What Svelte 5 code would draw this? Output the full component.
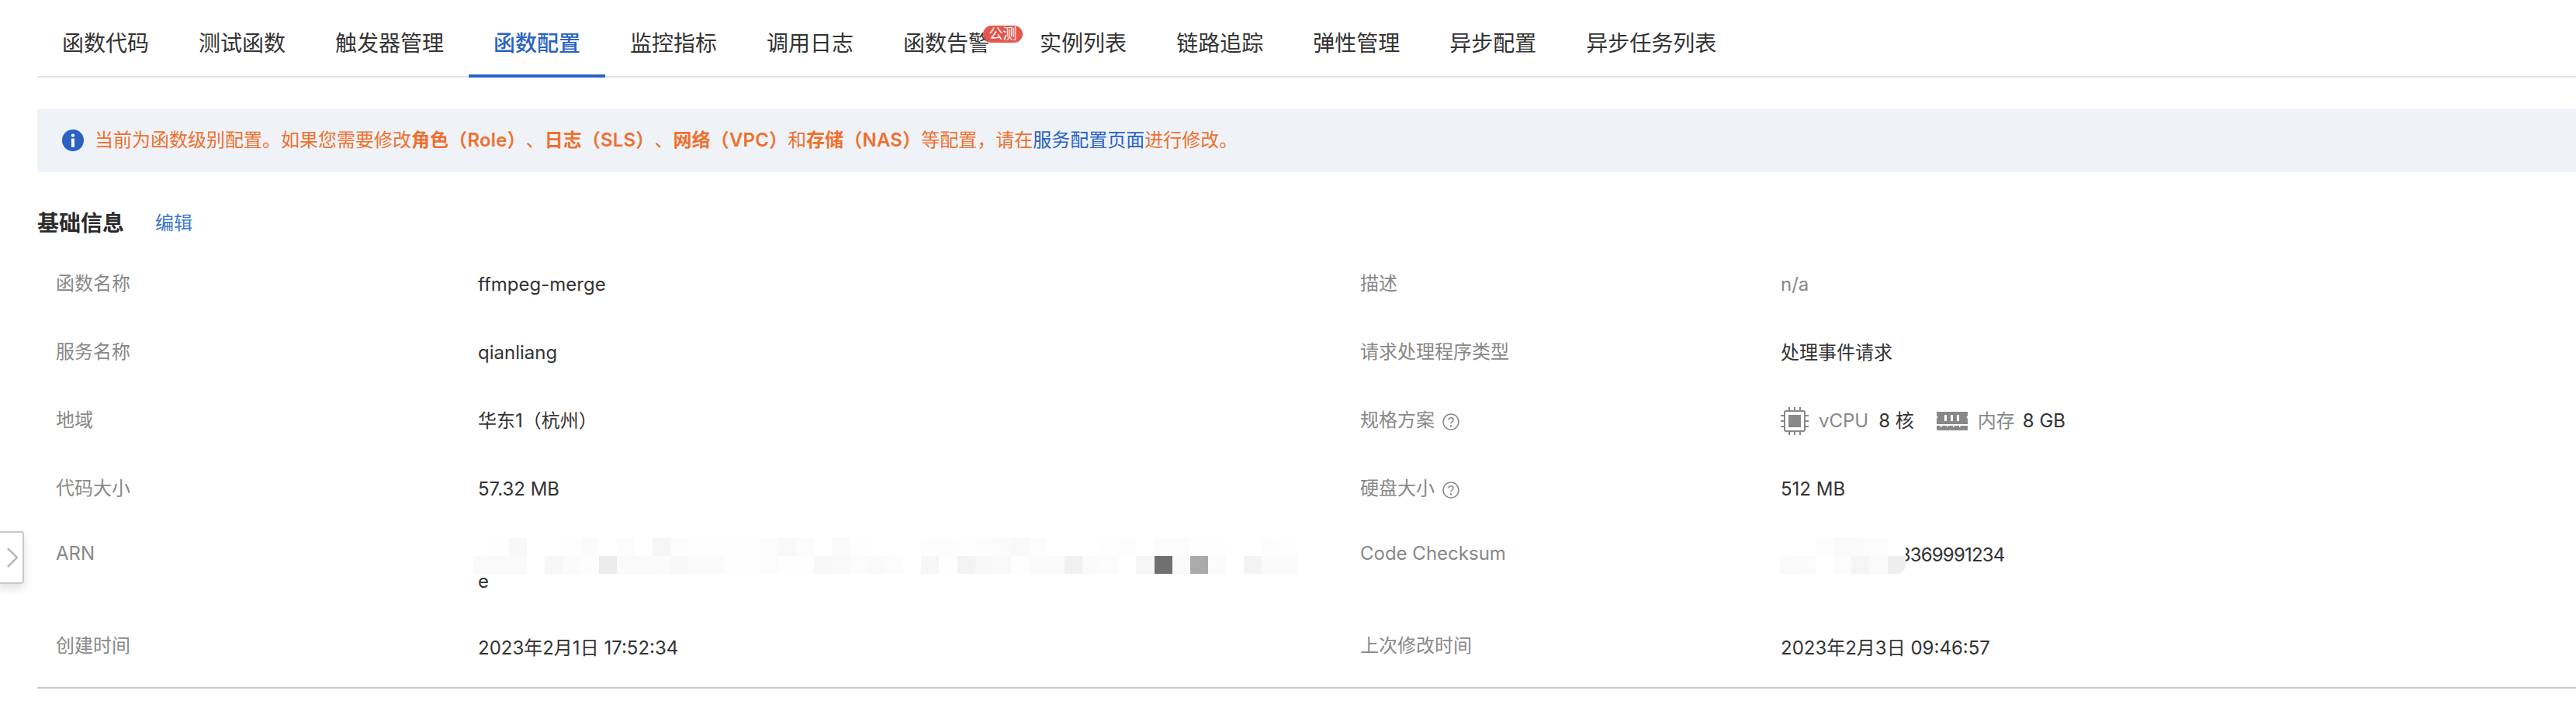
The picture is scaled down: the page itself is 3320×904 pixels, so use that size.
<script>
    const tabs = ['函数代码', '测试函数', '触发器管理', '函数配置', '监控指标', '调用日志', '函数告警', '实例列表', '链路追踪', '弹性管理', '异步配置', '异步任务列表']

    // mosaic cells, as grey levels, over the hidden part of the ARN and the checksum
    const arnTop = ['ff','fe','f8','ff','ff','fe','fb','ff','fc','ff','f6','fc','fe','fe','fe','fe','fc','f9','fc','ff','fa','fe','ff','ff','ff','fd','fd','fe','fd','fb','f9','fc','ff','ff','ff','fe','fd','ff','fc','fc','fe','fe','ff','ff','fd','fe']
    const arnBottom = ['fa','fa','fa','ff','f7','fb','fd','ec','fa','fa','fb','f8','fb','fb','fe','fe','fc','fe','fe','f8','f9','fc','fa','fc','ff','f7','fe','f3','f8','f9','fe','fb','fb','f0','fb','fc','ff','f6','70','fa','aa','fb','ff','f4','fb','fb']
    const sumTop = ['ff','ff','fd','fa','fb','fc','ff']
    const sumBottom = ['fa','fb','ff','fc','f5','fa','ee']

    const grey = (v) => `background:#${v}${v}${v}`
</script>

{#snippet help()}
    <svg class="help" width="22" height="22" viewBox="0 0 22 22" fill="none" stroke="#888" stroke-width="1.5">
        <circle cx="11" cy="11" r="10" />
        <path d="M8 8.6c0-1.7 1.3-2.8 3-2.8s3 1.1 3 2.7c0 1.3-.8 1.900-1.700 2.500-.9.6-1.300 1.100-1.300 2.200" />
        <circle cx="11" cy="16.3" r=".6" fill="#888" />
    </svg>
{/snippet}

{#snippet mosaic(top, bottom, step)}
    <div class="mosaic">
        <div class="cells">
            {#each top as v}
                <span style="width:{step}px;{grey(v)}"></span>
            {/each}
        </div>
        <div class="cells">
            {#each bottom as v}
                <span style="width:{step}px;{grey(v)}"></span>
            {/each}
        </div>
    </div>
{/snippet}

<div class="page">
    <nav class="tabs">
        {#each tabs as tab}
            <div class="tab" class:active={tab === '函数配置'}>
                {tab}
                {#if tab === '函数告警'}
                    <span class="badge">公测</span>
                {/if}
            </div>
        {/each}
    </nav>

    <div class="banner">
        <svg width="28" height="28" viewBox="0 0 28 28">
            <circle cx="14" cy="14" r="14" fill="#2a62c4" />
            <circle cx="14" cy="7.6" r="2.2" fill="#fff" />
            <rect x="12" y="11.6" width="4" height="11" fill="#fff" />
        </svg>
        <p>当前为函数级别配置。如果您需要修改<b>角色（Role）</b>、<b>日志（SLS）</b>、<b>网络（VPC）</b>和<b>存储（NAS）</b>等配置，请在<a href="#service">服务配置页面</a>进行修改。</p>
    </div>

    <div class="heading">
        <h3>基础信息</h3>
        <a href="#edit">编辑</a>
    </div>

    <div class="info">
        <div class="label">函数名称</div>
        <div class="value">ffmpeg-merge</div>
        <div class="label">描述</div>
        <div class="value muted">n/a</div>

        <div class="label">服务名称</div>
        <div class="value">qianliang</div>
        <div class="label">请求处理程序类型</div>
        <div class="value">处理事件请求</div>

        <div class="label">地域</div>
        <div class="value">华东1（杭州）</div>
        <div class="label">规格方案 {@render help()}</div>
        <div class="value spec">
            <svg width="36" height="36" viewBox="0 0 36 36" fill="none" stroke="#888">
                <rect x="5" y="5" width="26" height="26" rx="2" stroke-width="2" />
                <rect x="10" y="10" width="16" height="16" fill="#888" stroke="none" />
                <path stroke-width="2" d="M11 0v4M18 0v4M25 0v4M11 32v4M18 32v4M25 32v4M0 11h4M0 18h4M0 25h4M32 11h4M32 18h4M32 25h4" />
            </svg>
            <span class="muted unit">vCPU</span>
            <span>8 核</span>
            <svg class="ram" width="40" height="24" viewBox="0 0 40 24" fill="#888">
                <path d="M0 0h40v5l-1.500 2 1.500 2v7H0V9l1.500-2L0 5z" />
                <path fill="#fff" d="M10 4h3v8h-3zM18 4h3v8h-3zM26 4h3v8h-3z" />
                <path d="M0 18h40v6H0z" />
                <path fill="#fff" d="M5 18h1.500v2H5zM13 18h1.500v2H13zM21 18h1.500v2H21zM29 18h1.500v2H29z" />
            </svg>
            <span class="muted unit mem">内存</span>
            <span>8 GB</span>
        </div>

        <div class="label">代码大小</div>
        <div class="value">57.32 MB</div>
        <div class="label">硬盘大小 {@render help()}</div>
        <div class="value">512 MB</div>

        <div class="label tight">ARN</div>
        <div class="value arn">
            {@render mosaic(arnTop, arnBottom, 23.1)}
            <div>e</div>
        </div>
        <div class="label tight">Code Checksum</div>
        <div class="value checksum">
            <span class="digits">3369991234</span>
            {@render mosaic(sumTop, sumBottom, 23.1)}
        </div>

        <div class="label last">创建时间</div>
        <div class="value">2023年2月1日 17:52:34</div>
        <div class="label last">上次修改时间</div>
        <div class="value">2023年2月3日 09:46:57</div>
    </div>

    <button class="collapse" aria-label="展开">
        <svg width="16" height="26" viewBox="0 0 16 26" fill="none" stroke="#b4b8bd" stroke-width="2.500">
            <path d="M2 1l12 12L2 25" />
        </svg>
    </button>
</div>

<style>
    :global(body) {
        background: #fff;
    }
    .page {
        position: relative;
        height: 904px;
        padding-left: 48px;
        overflow: hidden;
        font-family: Inter, 'Noto Sans CJK SC', sans-serif;
        font-size: 24px;
        line-height: 36px;
        color: #333;
        text-spacing-trim: space-all;
    }
    .tabs {
        display: flex;
        height: 100px;
        border-bottom: 2px solid #e3e3e3;
        box-sizing: border-box;
    }
    .tab {
        position: relative;
        height: 100px;
        padding: 0 32px;
        box-sizing: border-box;
        font-size: 28px;
        line-height: 112px;
        color: #333;
    }
    .tab.active {
        color: #2a62c4;
        font-weight: 500;
        border-bottom: 4px solid #2a62c4;
    }
    .badge {
        position: absolute;
        top: 33px;
        left: 135px;
        width: 51px;
        height: 22px;
        border-radius: 11px;
        background: #e5574d;
        color: #fff;
        font-size: 18px;
        line-height: 22px;
        font-weight: 400;
        text-align: center;
    }
    .banner {
        display: flex;
        align-items: center;
        gap: 14px;
        height: 82px;
        margin-top: 40px;
        padding-left: 32px;
        border-radius: 4px;
        background: #eff3f8;
        color: #f0702e;
    }
    .banner p {
        margin: 0;
    }
    .banner b {
        font-weight: 600;
        letter-spacing: 0.15px;
    }
    a {
        color: #2a62c4;
        text-decoration: none;
    }
    .heading {
        display: flex;
        align-items: center;
        gap: 40px;
        height: 36px;
        margin-top: 48px;
    }
    .heading h3 {
        margin: 0;
        font-size: 28px;
        font-weight: 600;
        color: #2b2b2b;
    }
    .heading a {
        color: #3a76cf;
    }
    .info {
        display: grid;
        grid-template-columns: 544px 1137px 542px 1fr;
        margin-top: 17px;
        padding-left: 24px;
        padding-bottom: 6px;
        border-bottom: 2px solid #c5c9ce;
    }
    .label,
    .value {
        padding: 26px 0;
    }
    .label {
        display: flex;
        align-items: flex-start;
        color: #888;
        gap: 10px;
        margin-top: -1px;
    }
    .label.tight {
        margin-top: -5px;
    }
    .label.last {
        margin-top: -3px;
    }
    .value {
        color: #333;
    }
    .muted {
        color: #888;
    }
    .help {
        margin-top: 9px;
    }
    .spec {
        display: flex;
        align-items: center;
        height: 36px;
    }
    .unit {
        margin: 0 13px;
    }
    .unit.mem {
        margin-right: 10px;
    }
    .ram {
        margin-left: 29px;
    }
    .mosaic {
        height: 46px;
        flex: none;
    }
    .cells {
        display: flex;
        height: 23px;
    }
    .cells span {
        flex: none;
    }
    .arn {
        padding-bottom: 24px;
    }
    .arn .mosaic {
        margin: -7px 0 -8px -6px;
    }
    .checksum {
        display: flex;
        flex-direction: row-reverse;
        justify-content: flex-end;
        position: relative;
        padding-bottom: 0;
    }
    .checksum .mosaic {
        margin: -7px 0 0 -1px;
        position: relative;
        z-index: 1;
    }
    .checksum .cells:last-child span:last-child {
        border-radius: 0 0 12px 0;
    }
    .digits {
        margin: -3px 0 0 -8px;
        letter-spacing: -0.8px;
    }
    .collapse {
        position: absolute;
        left: -4px;
        top: 685px;
        width: 35px;
        height: 68px;
        padding: 0 0 0 4px;
        display: flex;
        align-items: center;
        justify-content: center;
        background: #fff;
        border: 2px solid #c5c9ce;
        border-radius: 4px;
        box-shadow: 0 6px 12px rgba(0, 0, 0, 0.12);
    }
</style>
